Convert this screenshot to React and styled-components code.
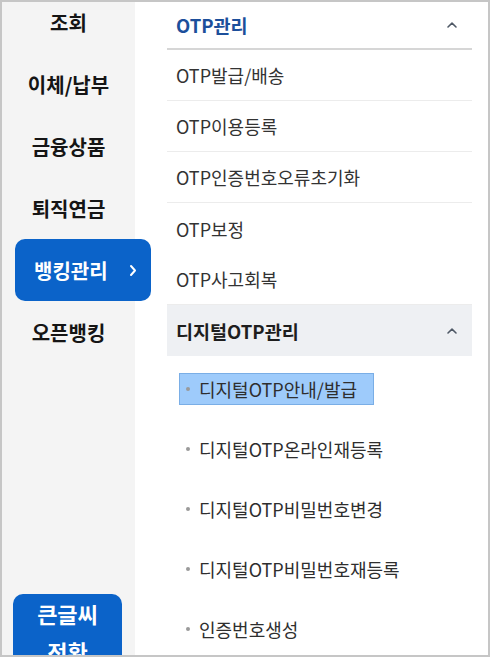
import styled, { createGlobalStyle } from "styled-components";

const GlobalStyle = createGlobalStyle`
  html, body {
    margin: 0;
    padding: 0;
    background: #ffffff;
  }
  body {
    font-family: "Noto Sans CJK KR", "Noto Sans", sans-serif;
  }
`;

const sideMenus = ["조회", "이체/납부", "금융상품", "퇴직연금", "뱅킹관리", "오픈뱅킹"];
const otpMenus = ["OTP발급/배송", "OTP이용등록", "OTP인증번호오류초기화", "OTP보정", "OTP사고회복"];
const digitalMenus = [
  "디지털OTP안내/발급",
  "디지털OTP온라인재등록",
  "디지털OTP비밀번호변경",
  "디지털OTP비밀번호재등록",
  "인증번호생성",
];

function ChevronUp() {
  return (
    <svg width="12" height="8" viewBox="0 0 12 8">
      <path d="M2 6 L6 2.2 L10 6" fill="none" stroke="#4f5966" strokeWidth="1.6" strokeLinecap="round" strokeLinejoin="round" />
    </svg>
  );
}

function ChevronRight() {
  return (
    <svg width="8" height="13" viewBox="0 0 8 13">
      <path d="M2 2 L6 6.5 L2 11" fill="none" stroke="#ffffff" strokeWidth="2" strokeLinecap="round" strokeLinejoin="round" />
    </svg>
  );
}

export default function App() {
  const active = "뱅킹관리";

  return (
    <>
      <GlobalStyle />
      <Frame>
        <Sidebar>
          <SideList>
            {sideMenus.map(menu => (
              <SideItem key={menu}>
                {menu === active ? (
                  <ActiveButton>
                    <span>{menu}</span>
                    <ChevronRight />
                  </ActiveButton>
                ) : (
                  <SideLabel>{menu}</SideLabel>
                )}
              </SideItem>
            ))}
          </SideList>
          <BigFontButton>큰글씨<br />전환</BigFontButton>
        </Sidebar>

        <Content>
          <GroupHeader>
            <GroupTitle $accent>OTP관리</GroupTitle>
            <ChevronUp />
          </GroupHeader>
          {otpMenus.map(menu => (
            <Row key={menu}>{menu}</Row>
          ))}

          <GroupHeader $shaded>
            <GroupTitle>디지털OTP관리</GroupTitle>
            <ChevronUp />
          </GroupHeader>
          <SubList>
            {digitalMenus.map((menu, i) => (
              <SubItem key={menu}>
                <SubLink $selected={i === 0}>
                  <Dot />
                  {menu}
                </SubLink>
              </SubItem>
            ))}
          </SubList>
        </Content>
      </Frame>
    </>
  );
}

const Frame = styled.div`
  width: 490px;
  height: 657px;
  box-sizing: border-box;
  border: 2px solid #c6c6c6;
  display: grid;
  grid-template-columns: 133px 1fr;
  overflow: hidden;
  background: #ffffff;
`;

const Sidebar = styled.aside`
  background: #f4f4f4;
  display: flex;
  flex-direction: column;
  position: relative;
  z-index: 1;
`;

const SideList = styled.ul`
  list-style: none;
  margin: -11px 0 0;
  padding: 0;
`;

const SideItem = styled.li`
  height: 62px;
  display: flex;
  align-items: center;
  justify-content: center;
`;

const SideLabel = styled.span`
  font-size: 20px;
  font-weight: 700;
  color: #151515;
`;

const ActiveButton = styled.button`
  align-self: stretch;
  margin: 0 -16px 0 13px;
  flex: 1;
  border: none;
  border-radius: 10px;
  background: #0b63c9;
  color: #ffffff;
  font-family: inherit;
  font-size: 20px;
  font-weight: 700;
  display: flex;
  align-items: center;
  justify-content: space-between;
  padding: 0 14px 0 19px;
`;

const BigFontButton = styled.button`
  margin: 231px 0 0 11px;
  width: 109px;
  padding: 0;
  border: none;
  border-radius: 10px;
  background: #0b63c9;
  color: #ffffff;
  font-family: inherit;
  font-size: 22px;
  font-weight: 700;
  line-height: 38px;
  text-align: center;
`;

const Content = styled.main`
  padding: 0 16px 0 32px;
  display: flex;
  flex-direction: column;
  background: #ffffff;
`;

const GroupHeader = styled.div`
  height: ${p => (p.$shaded ? "51px" : "45px")};
  display: flex;
  align-items: center;
  justify-content: space-between;
  padding: ${p => (p.$shaded ? "0 14px 0 9px" : "0 14px 1px 9px")};
  background: ${p => (p.$shaded ? "#eef0f3" : "transparent")};
  border-bottom: ${p => (p.$shaded ? "none" : "2px solid #d6d6d6")};
  flex-shrink: 0;
`;

const GroupTitle = styled.span`
  font-size: 18.5px;
  font-weight: 700;
  color: ${p => (p.$accent ? "#1c4f9b" : "#1e1e1e")};
`;

const Row = styled.div`
  height: 50px;
  flex-shrink: 0;
  display: flex;
  align-items: center;
  padding-left: 9px;
  font-size: 18px;
  color: #333333;
  border-bottom: 1px solid #ececec;

  &:nth-of-type(5) {
    border-bottom: none;
    height: 51px;
  }
`;

const SubList = styled.ul`
  list-style: none;
  margin: 0;
  padding: 3px 0 0;
`;

const SubItem = styled.li`
  height: 60px;
  display: flex;
  align-items: center;
  padding-left: 12px;
`;

const SubLink = styled.span`
  display: inline-flex;
  align-items: center;
  gap: 9px;
  height: 32px;
  box-sizing: border-box;
  padding: 0 16px 0 6px;
  font-size: 18px;
  color: #2e2e2e;
  background: ${p => (p.$selected ? "#9ecbfb" : "transparent")};
  border: 1px solid ${p => (p.$selected ? "#7aaee6" : "transparent")};
`;

const Dot = styled.i`
  width: 4px;
  height: 4px;
  border-radius: 50%;
  background: #9a9a9a;
  flex-shrink: 0;
`;
